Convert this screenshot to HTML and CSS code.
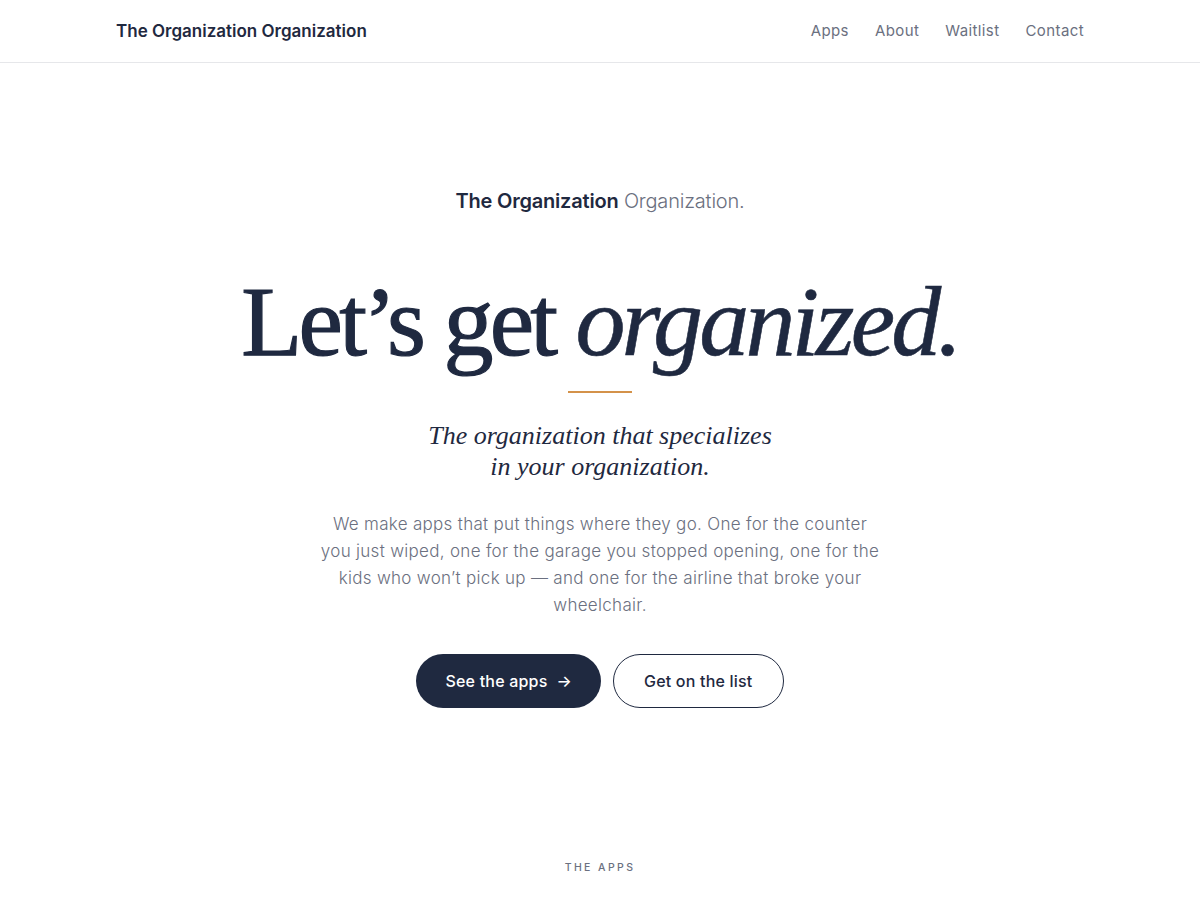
FILE: index.html
```html
<!DOCTYPE html>
<html lang="en">
<head>
<meta charset="utf-8">
<title>The Organization Organization</title>
<link rel="stylesheet" href="styles.css">
</head>
<body>
<header class="topbar">
  <div class="topbar-inner">
    <a class="brand" href="#">The Organization Organization</a>
    <nav class="nav">
      <a href="#">Apps</a>
      <a href="#">About</a>
      <a href="#">Waitlist</a>
      <a href="#">Contact</a>
    </nav>
  </div>
</header>
<main>
  <section class="hero">
    <p class="eyebrow"><strong>The Organization</strong> <span>Organization.</span></p>
    <h1 class="title">Let’s get <em>organized.</em></h1>
    <div class="rule"></div>
    <p class="tagline">The organization that specializes<br>in your organization.</p>
    <p class="lede">We make apps that put things where they go. One for the counter you just wiped, one for the garage you stopped opening, one for the kids who won’t pick up — and one for the airline that broke your wheelchair.</p>
    <div class="actions">
      <a class="btn btn-dark" href="#">See the apps <span class="arrow">→</span></a>
      <a class="btn btn-outline" href="#">Get on the list</a>
    </div>
  </section>
  <section class="apps">
    <p class="section-label">THE APPS</p>
  </section>
</main>
</body>
</html>
```
FILE: styles.css
```css
* { box-sizing: border-box; }
html, body { margin: 0; padding: 0; }
body {
  font-family: Inter, "Noto Sans", sans-serif;
  color: #1f2940;
  background: #fff;
  overflow: hidden;
}
a { text-decoration: none; color: inherit; }

.topbar {
  height: 63px;
  border-bottom: 1px solid #e6e7ea;
}
.topbar-inner {
  max-width: 968px;
  margin: 0 auto;
  height: 100%;
  display: flex;
  align-items: center;
  justify-content: space-between;
  padding-bottom: 1px;
}
.brand {
  font-size: 17px;
  font-weight: 600;
  color: #1f2940;
}
.nav { display: flex; gap: 26px; }
.nav a {
  font-size: 15px;
  color: #6b7080;
  font-weight: 400;
  letter-spacing: 0.4px;
}

.hero {
  display: flex;
  flex-direction: column;
  align-items: center;
  text-align: center;
  padding-top: 124px;
}
.eyebrow {
  margin: 0;
  font-size: 20px;
  line-height: 28px;
  letter-spacing: -0.2px;
}
.eyebrow strong { font-weight: 600; color: #1f2940; }
.eyebrow span { font-weight: 300; color: #6b7080; }

.title {
  margin: 52px 0 0;
  font-family: "Liberation Serif", "DejaVu Serif", serif;
  font-weight: 400;
  font-size: 100px;
  line-height: 110px;
  letter-spacing: -3.8px;
  color: #1f2940;
  -webkit-text-stroke: 1.2px #1f2940;
}
.title em { font-style: italic; font-weight: 400; -webkit-text-stroke: 0.6px #1f2940; }

.rule {
  width: 64px;
  height: 2px;
  background: #d4924a;
  margin-top: 14px;
}
.tagline {
  margin: 27px 0 0;
  font-family: "Liberation Serif", "DejaVu Serif", serif;
  font-style: italic;
  font-size: 26px;
  line-height: 31px;
  color: #1f2940;
}
.lede {
  margin: 29px 0 0;
  max-width: 564px;
  font-size: 17px;
  line-height: 27px;
  font-weight: 300;
  letter-spacing: 0.3px;
  color: #6b7080;
}
.actions {
  display: flex;
  gap: 12px;
  margin-top: 35px;
}
.btn {
  height: 54px;
  border-radius: 27px;
  display: inline-flex;
  align-items: center;
  justify-content: center;
  font-size: 16px;
  font-weight: 500;
  padding: 0 29px;
  letter-spacing: 0.2px;
}
.btn-dark { background: #1f2940; color: #fff; gap: 9px; }
.btn-outline { border: 1px solid #1f2940; color: #1f2940; padding: 0 30px; }
.arrow { font-size: 16px; }

.apps {
  padding-top: 153px;
  text-align: center;
}
.section-label {
  margin: 0;
  font-size: 10.5px;
  letter-spacing: 2.4px;
  font-weight: 500;
  color: #6b7080;
}
```
